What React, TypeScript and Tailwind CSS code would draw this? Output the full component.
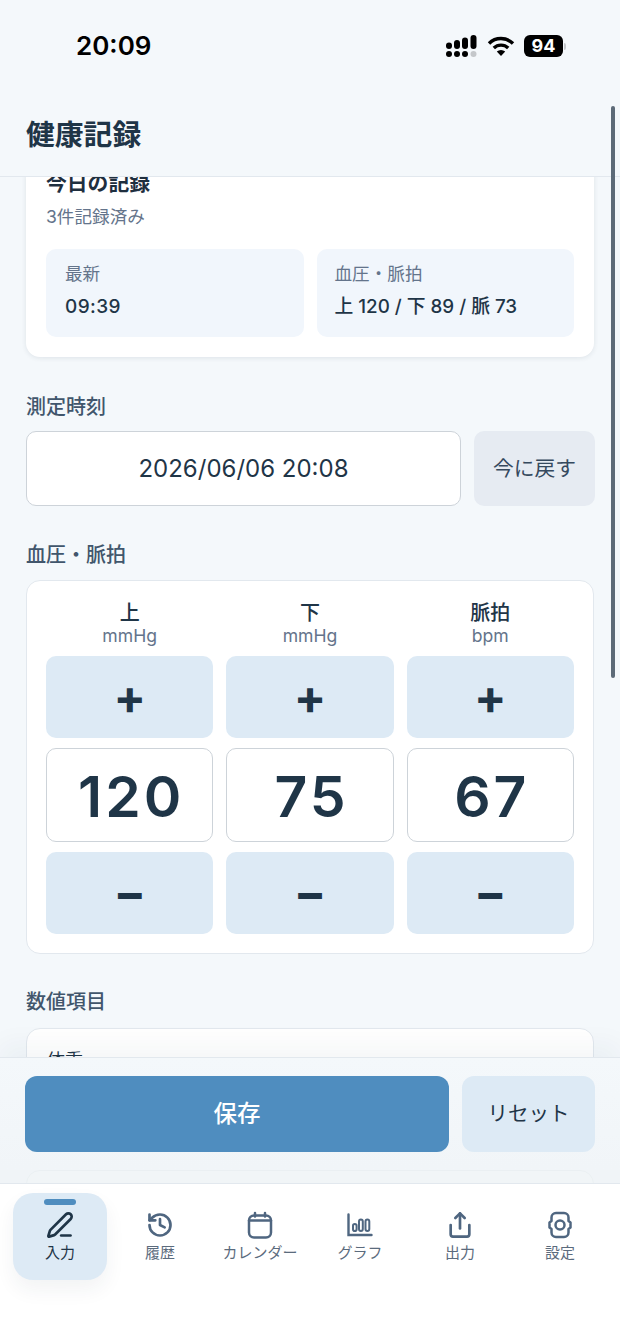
import { History, PenLine, Share } from 'lucide-react';

const fontStack = "font-['Inter','Noto_Sans_CJK_JP',sans-serif]";

const columns = [
  { label: '上', unit: 'mmHg', value: '120' },
  { label: '下', unit: 'mmHg', value: '75' },
  { label: '脈拍', unit: 'bpm', value: '67' },
];

const StatusBar = () => (
  <div className="flex h-[92px] items-center justify-between pl-[76px] pr-[54px]">
    <span className="text-[26px] font-semibold leading-none text-black">20:09</span>
    <div className="flex items-center gap-[9px]">
      <svg width="32" height="24" viewBox="0 0 32 24" fill="#000">
        <rect x="0" y="8.5" width="6" height="6.5" rx="3" />
        <rect x="8" y="6" width="6" height="9" rx="3" />
        <rect x="16" y="3.5" width="6" height="11.5" rx="3" />
        <rect x="24.5" y="1" width="6" height="14" rx="3" />
        <circle cx="3" cy="20" r="3" />
        <circle cx="11" cy="20" r="3" />
        <circle cx="19" cy="20" r="3" />
        <circle cx="27.500" cy="20" r="3" fill="#c4c7ca" />
      </svg>
      <svg width="28" height="22" viewBox="0 0 28 22" fill="none" stroke="#000" strokeWidth="3.4">
        <path d="M2 8.500a17 17 0 0 1 24 0" />
        <path d="M6.800 13a10.400 10.400 0 0 1 14.400 0" />
        <path d="M14 21l-4.200-4.400a6 6 0 0 1 8.400 0z" fill="#000" stroke="none" />
      </svg>
      <div className="flex items-center">
        <span className="flex h-[22px] w-[39px] items-center justify-center rounded-[6px] bg-black text-[18px] font-bold leading-none text-white">
          94
        </span>
        <span className="ml-[1px] h-[7px] w-[2px] rounded-r-sm bg-[#c4c7ca]" />
      </div>
    </div>
  </div>
);

const CalendarIcon = () => (
  <svg width="28" height="28" viewBox="0 0 28 28" fill="none" stroke="#4f6680" strokeWidth="2.5" strokeLinecap="round">
    <rect x="3" y="4.500" width="22" height="22" rx="5" />
    <path d="M3 9.500h22M9 2v3.500M19 2v3.500" />
  </svg>
);

const GraphIcon = () => (
  <svg width="28" height="28" viewBox="0 0 28 28" fill="none" stroke="#4f6680" strokeLinecap="round">
    <path d="M2.500 3.500v20.500h23" strokeWidth="2.4" />
    <rect x="7" y="13" width="3.600" height="7" rx="1.800" strokeWidth="2" />
    <rect x="13" y="8.500" width="3.800" height="11.500" rx="1.900" strokeWidth="2" />
    <rect x="19.500" y="8.500" width="3.800" height="11.500" rx="1.900" strokeWidth="2" />
  </svg>
);

const GearIcon = () => (
  <svg width="28" height="28" viewBox="0 0 28 28" fill="none" stroke="#4f6680" strokeWidth="2.500" strokeLinejoin="round">
    <path d="M10 2h8a4.500 4.500 0 0 1 4.500 4.500V10l2 1.500v5l-2 1.500v3.500A4.500 4.500 0 0 1 18 26h-8a4.500 4.500 0 0 1-4.500-4.500V18l-2-1.500v-5l2-1.500V6.500A4.500 4.500 0 0 1 10 2z" />
    <circle cx="14" cy="14" r="4.500" />
  </svg>
);

const NavItem = ({ icon, label }: { icon: React.ReactNode; label: string }) => (
  <div className="flex flex-col items-center pt-[27px]">
    <div className="flex h-[28px] items-center justify-center">{icon}</div>
    <span className="mt-[5px] whitespace-nowrap text-[15px] leading-[18px] text-[#5b6b7d]">{label}</span>
  </div>
);

export default function App() {
  return (
    <div className={`${fontStack} relative flex h-[1344px] w-[620px] flex-col overflow-hidden bg-[#f4f8fb]`}>
      <header className="z-10 h-[177px] border-b border-[#e2e8ee] bg-[#f4f8fb]">
        <StatusBar />
        <h1 className="mt-[23px] pl-[26px] text-[28.8px] font-semibold leading-[40px] text-[#1f3547]">健康記録</h1>
      </header>

      <main className="relative flex-1 overflow-hidden">
        <div className="flex flex-col px-[26px]">
          {/* today card, scrolled under the header */}
          <section className="-mt-[16px] rounded-[14px] bg-white px-[20px] pb-[20px] pt-[10px] shadow-[0_1px_5px_rgba(31,53,71,0.1)]">
            <h2 className="text-[20.8px] font-semibold leading-[26px] text-[#1f2f3f]">今日の記録</h2>
            <p className="mt-[8px] text-[17.6px] leading-[24px] text-[#64748b]">3件記録済み</p>
            <div className="mt-[20px] grid grid-cols-2 gap-[13px]">
              <div className="h-[88px] rounded-[10px] bg-[#f1f6fc] px-[19px] pt-[14px]">
                <p className="text-[17.6px] leading-[22px] text-[#64748b]">最新</p>
                <p className="mt-[10px] text-[19px] font-medium leading-[24px] tracking-[0.4px] text-[#1f3547]">09:39</p>
              </div>
              <div className="h-[88px] rounded-[10px] bg-[#f1f6fc] px-[18px] pt-[14px]">
                <p className="text-[17.6px] leading-[22px] text-[#64748b]">血圧・脈拍</p>
                <p className="mt-[10px] whitespace-nowrap text-[18.8px] font-medium leading-[24px] text-[#1f3547]">上 120 / 下 89 / 脈 73</p>
              </div>
            </div>
          </section>

          <h3 className="mt-[37px] text-[20px] font-medium leading-[26px] text-[#41566c]">測定時刻</h3>
          <div className="-mr-[1px] mt-[11px] flex gap-[13px]">
            <div className="flex h-[75px] flex-1 items-center justify-center rounded-[10px] border border-[#cdd3d9] bg-white text-[24px] leading-none text-[#1f3547]">
              2026/06/06 20:08
            </div>
            <button className="h-[75px] w-[121px] rounded-[10px] bg-[#e6ebf2] text-[20.8px] text-[#35495e]">今に戻す</button>
          </div>

          <h3 className="mt-[36px] text-[20px] font-medium leading-[26px] text-[#41566c]">血圧・脈拍</h3>
          <section className="mt-[12px] rounded-[14px] border border-[#e2e8ee] bg-white px-[19px] pb-[19px] pt-[19px]">
            <div className="grid grid-cols-3 gap-[13px]">
              {columns.map((col) => (
                <div key={col.label} className="flex flex-col items-center">
                  <span className="text-[20px] font-medium leading-[26px] text-[#1f3547]">{col.label}</span>
                  <span className="text-[17.6px] leading-[20px] text-[#64748b]">{col.unit}</span>
                  <button className="mt-[10px] flex h-[82px] w-full items-center justify-center rounded-[10px] bg-[#ddeaf5] text-[48px] font-bold leading-none text-[#1f3547]">
                    +
                  </button>
                  <div className="mt-[10px] flex h-[94px] w-full items-center justify-center rounded-[10px] border border-[#cdd3d9] bg-white pl-[3px] pt-[2px] text-[57px] font-semibold leading-none tracking-[3px] text-[#1f3547]">
                    {col.value}
                  </div>
                  <button className="mt-[10px] flex h-[82px] w-full items-center justify-center rounded-[10px] bg-[#ddeaf5] text-[48px] font-bold leading-none text-[#1f3547]">
                    −
                  </button>
                </div>
              ))}
            </div>
          </section>

          <h3 className="mt-[35px] text-[20px] font-medium leading-[26px] text-[#41566c]">数値項目</h3>
          <section className="mt-[13px] flex h-[130px] items-start justify-between rounded-[14px] border border-[#e2e8ee] bg-white px-[20px] pt-[20px] text-[18px] leading-[24px] text-[#1f3547]">
            <span>体重</span>
            <span className="pr-[16px]">+</span>
          </section>
          <section className="mt-[12px] h-[60px] rounded-[14px] border border-[#cfd6dc] bg-white" />
        </div>

        {/* sticky save bar over the scrolling form */}
        <div className="absolute inset-x-0 bottom-[13px] h-[113px] border-t border-[#e2e8ee] bg-gradient-to-b from-[#f4f8fb] to-[#f1f5f8] px-[25px] pt-[18px] shadow-[0_-14px_24px_rgba(31,53,71,0.04)]">
          <div className="flex gap-[13px]">
            <button className="h-[76px] w-[424px] rounded-[12px] bg-[#4f8dbf] text-[23.5px] font-medium text-white">保存</button>
            <button className="h-[76px] flex-1 rounded-[12px] bg-[#ddeaf5] text-[20.5px] text-[#1f3547]">リセット</button>
          </div>
        </div>

        <div className="pointer-events-none absolute inset-x-0 bottom-0 h-[13px] bg-[#eff3f6]/85" />
      </main>

      <nav className="relative z-10 grid h-[161px] grid-cols-6 border-t border-[#e2e8ee] bg-white px-[10px]">
        <div className="relative flex flex-col items-center">
          <div className="absolute left-[3px] top-[9px] h-[87px] w-[94px] rounded-[20px] bg-[#ddeaf5] shadow-[0_10px_20px_rgba(31,53,71,0.06)]" />
          <span className="absolute top-[15px] h-[6px] w-[32px] rounded-full bg-[#4f8dbf]" />
          <div className="relative flex flex-col items-center pt-[27px]">
            <PenLine size={28} strokeWidth={2.3} color="#1f3547" />
            <span className="mt-[5px] text-[15px] leading-[18px] text-[#1f3547]">入力</span>
          </div>
        </div>
        <NavItem icon={<History size={28} strokeWidth={2.3} color="#4f6680" />} label="履歴" />
        <NavItem icon={<CalendarIcon />} label="カレンダー" />
        <NavItem icon={<GraphIcon />} label="グラフ" />
        <NavItem icon={<Share size={28} strokeWidth={2.3} color="#4f6680" />} label="出力" />
        <NavItem icon={<GearIcon />} label="設定" />
      </nav>

      {/* overlay scrollbar */}
      <div className="absolute right-[5px] top-[106px] z-20 h-[572px] w-[4px] rounded-full bg-[#5d6b78]" />
    </div>
  );
}
